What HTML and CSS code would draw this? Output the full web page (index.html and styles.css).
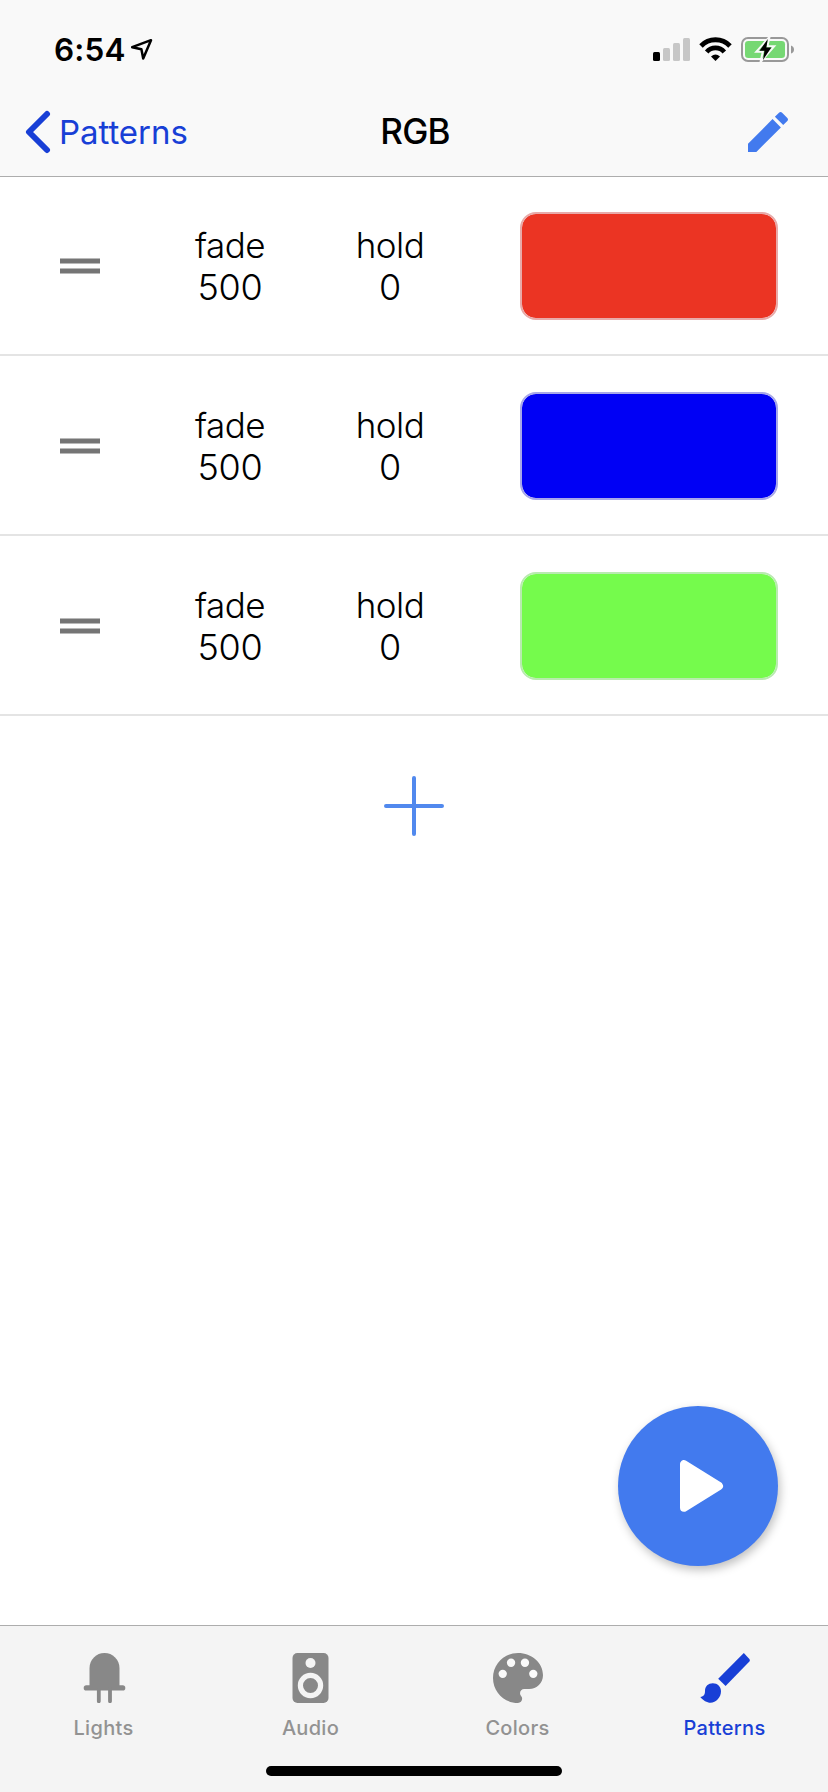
FILE: index.html
```html
<!DOCTYPE html>
<html lang="en">
<head>
<meta charset="utf-8">
<title>RGB</title>
<link rel="stylesheet" href="styles.css">
</head>
<body>
<div class="screen">
  <header class="header">
    <div class="status">
      <span class="time">6:54</span>
      <svg class="location" width="24" height="24" viewBox="0 0 24 24"><path d="M2.2 9.2 21 2.2 13.2 20.5 11.4 11.2Z" fill="none" stroke="#000" stroke-width="2.5" stroke-linejoin="round"/></svg>
      <svg class="indicators" width="142" height="28" viewBox="0 0 142 28">
        <rect x="0" y="16" width="7" height="9" rx="1.5"/>
        <g fill="#c7c7c7"><rect x="10" y="12" width="7" height="13" rx="1.5"/><rect x="20" y="7" width="7" height="18" rx="1.5"/><rect x="30" y="2" width="7" height="23" rx="1.5"/></g>
        <g fill="none" stroke="#000"><path d="M48 10A20 20 0 0 1 77 10" stroke-width="4.8"/><path d="M53.700 16A11.400 11.400 0 0 1 71.300 16" stroke-width="4.600"/></g>
        <path d="M58 20.500Q62.500 16.400 67 20.500L62.500 25Z"/>
        <rect x="89" y="2" width="46" height="23" rx="6" fill="none" stroke="#999" stroke-width="2"/>
        <rect x="92" y="5" width="40" height="17" rx="3.300" fill="#76d873"/>
        <path d="M138 9.500Q141 10.500 141 13.500T138 17.500Z" fill="#999"/>
        <path d="M116.500 1 103.300 15.700H109.800L107.500 26 121.200 10.300H114.500Z" fill="#76d873" stroke="#f9f9f9" stroke-width="2"/>
        <path d="M114.800 3 106.500 14.800H111.500L110 24 118.300 11.500H113.300Z"/>
      </svg>
    </div>
    <nav class="navbar">
      <a class="back">
        <svg width="26" height="44" viewBox="0 0 26 44"><path d="M22 4 4 22 22 40" fill="none" stroke="#183fd6" stroke-width="6" stroke-linecap="round" stroke-linejoin="round"/></svg>
        <span class="back-label">Patterns</span>
      </a>
      <h1 class="title">RGB</h1>
      <svg class="edit" width="40" height="40" viewBox="64 64 384 384" fill="#427aee"><path d="M64 368v80h80l235.727-235.729-79.999-79.998L64 368zm377.602-217.602c8.531-8.531 8.531-21.334 0-29.865l-50.135-50.135c-8.531-8.531-21.334-8.531-29.865 0l-39.468 39.469 79.999 79.998 39.469-39.467z"/></svg>
    </nav>
  </header>

  <main class="content">
    <div class="row">
      <svg class="handle" width="40" height="16" viewBox="0 0 40 16" fill="#757575"><path d="M0 .5h40v5H0zM0 10.500h40v5H0z"/></svg>
      <div class="param fade"><span>fade</span><span class="num">500</span></div>
      <div class="param hold"><span>hold</span><span class="num">0</span></div>
      <div class="swatch red"></div>
    </div>
    <div class="row">
      <svg class="handle" width="40" height="16" viewBox="0 0 40 16" fill="#757575"><path d="M0 .5h40v5H0zM0 10.500h40v5H0z"/></svg>
      <div class="param fade"><span>fade</span><span class="num">500</span></div>
      <div class="param hold"><span>hold</span><span class="num">0</span></div>
      <div class="swatch blue"></div>
    </div>
    <div class="row">
      <svg class="handle" width="40" height="16" viewBox="0 0 40 16" fill="#757575"><path d="M0 .5h40v5H0zM0 10.500h40v5H0z"/></svg>
      <div class="param fade"><span>fade</span><span class="num">500</span></div>
      <div class="param hold"><span>hold</span><span class="num">0</span></div>
      <div class="swatch green"></div>
    </div>
    <svg class="add" width="60" height="60" viewBox="0 0 60 60"><path d="M30 2v56M2 30h56" stroke="#5189ee" stroke-width="4" stroke-linecap="round"/></svg>
    <div class="fab">
      <svg width="44" height="52" viewBox="0 0 44 52"><path d="M4 4.200V47.800L39 26Z" fill="#fff" stroke="#fff" stroke-width="8" stroke-linejoin="round"/></svg>
    </div>
  </main>

  <footer class="tabbar">
    <div class="tabs">
      <div class="tab">
        <svg width="50" height="50" viewBox="0 0 50 50" fill="#888"><path d="M10.500 33V15a15 15 0 0 1 30 0V33Z"/><rect x="4.700" y="32.300" width="41.600" height="5.200" rx="2.600"/><path d="M19.800 36V48.300M31 36V48.300" stroke="#888" stroke-width="3.800" stroke-linecap="round"/></svg>
        <span>Lights</span>
      </div>
      <div class="tab">
        <svg width="50" height="50" viewBox="0 0 50 50"><rect x="6.500" y="0" width="36" height="50" rx="5" fill="#888"/><circle cx="24.500" cy="10" r="5" fill="#f4f4f4"/><circle cx="24.500" cy="32.500" r="10.100" fill="none" stroke="#f4f4f4" stroke-width="5.200"/></svg>
        <span>Audio</span>
      </div>
      <div class="tab">
        <svg width="50" height="50" viewBox="3 3 18 18"><path fill="#888" d="M12 3c-4.970 0-9 4.030-9 9s4.030 9 9 9c.83 0 1.500-.67 1.500-1.500 0-.39-.15-.74-.39-1.010-.23-.26-.38-.61-.38-.99 0-.83.67-1.500 1.500-1.500H16c2.760 0 5-2.240 5-5 0-4.420-4.030-8-9-8z"/><g fill="#fafafa"><circle cx="6.500" cy="10.500" r="1.500"/><circle cx="9.500" cy="6.500" r="1.500"/><circle cx="14.500" cy="6.500" r="1.500"/><circle cx="17.500" cy="10.500" r="1.500"/></g></svg>
        <span>Colors</span>
      </div>
      <div class="tab active">
        <svg width="50" height="50" viewBox="0 0 50 50" fill="#183fd6"><path d="M43.800 0 49.400 6Q50.400 7.400 49.400 8.500L25.600 33 18.200 25.700Z"/><path d="M.3 44C4 43.300 5 41.500 5 38 5 33 8.300 30.200 12.800 30.200 17.500 30.200 21 33.500 21 38.300 21 44.500 16 49.800 10.500 49.800 7 49.800 3 47.300.3 44Z"/></svg>
        <span>Patterns</span>
      </div>
    </div>
    <div class="home"></div>
  </footer>
</div>
</body>
</html>
```
FILE: styles.css
```css
* { box-sizing: border-box; }
body { margin: 0; background: #fff; font-family: Inter, "Liberation Sans", sans-serif; color: #000; }
svg { display: block; flex: none; }
.screen { width: 828px; height: 1792px; display: flex; flex-direction: column; }

.header { height: 177px; margin-bottom: -1px; background: #f9f9f9; border-bottom: 1px solid #adadad; flex: none; }
.status { height: 88px; padding: 36px 33px 0 54px; display: flex; align-items: flex-start; }
.time { width: 76px; font-size: 31.5px; font-weight: 600; line-height: 28px; letter-spacing: 0.2px; white-space: nowrap; }
.location { margin: 2px 0 0 0; }
.indicators { margin-left: auto; }
.navbar { height: 88px; display: grid; grid-template-columns: 1fr auto 1fr; align-items: center; padding: 0 25px; }
.back { display: flex; align-items: center; gap: 8px; color: #183fd6; font-size: 33px; letter-spacing: -0.05px; }
.title { margin: 0; font-size: 35px; font-weight: 500; letter-spacing: -0.8px; line-height: 42px; padding-left: 2px; position: relative; top: -1px; }
.edit { justify-self: end; margin-right: 15px; }

.content { flex: 1; display: flex; flex-direction: column; }
.row { height: 180px; border-bottom: 2px solid #e4e4e4; padding: 36px 50px 0 60px; display: flex; align-items: flex-start; }
.handle { margin-top: 46px; }
.param { width: 160px; margin-top: 12px; display: flex; flex-direction: column; align-items: center; font-size: 35px; font-weight: 300; line-height: 42px; letter-spacing: -0.5px; }
.num { font-size: 36px; letter-spacing: -0.2px; }
.fade { margin-left: 50px; }
.swatch { margin-left: auto; width: 258px; height: 108px; border-radius: 16px; border: 2px solid; background-clip: padding-box; }
.red { background-color: #eb3423; border-color: #e8aaa9; }
.blue { background-color: #0000f5; border-color: #a8a8e8; }
.green { background-color: #75fb4c; border-color: #b9eab0; }
.add { margin: 60px auto 0; }
.fab { margin: auto 50px 59px auto; width: 160px; height: 160px; border-radius: 50%; background: #427aee; box-shadow: 2px 4px 10px rgba(0, 0, 0, 0.25); display: flex; align-items: center; padding-left: 62px; }

.tabbar { height: 167px; background: #f4f4f4; border-top: 1px solid #adadad; flex: none; display: flex; flex-direction: column; align-items: center; }
.tabs { width: 828px; height: 140px; display: grid; grid-template-columns: repeat(4, 1fr); }
.tab { padding-top: 27px; display: flex; flex-direction: column; align-items: center; gap: 13px; color: #929292; font-size: 20px; font-weight: 500; line-height: 24px; letter-spacing: 0.3px; }
.active { color: #183fd6; }
.home { width: 296px; height: 10px; border-radius: 5px; background: #000; }
```
